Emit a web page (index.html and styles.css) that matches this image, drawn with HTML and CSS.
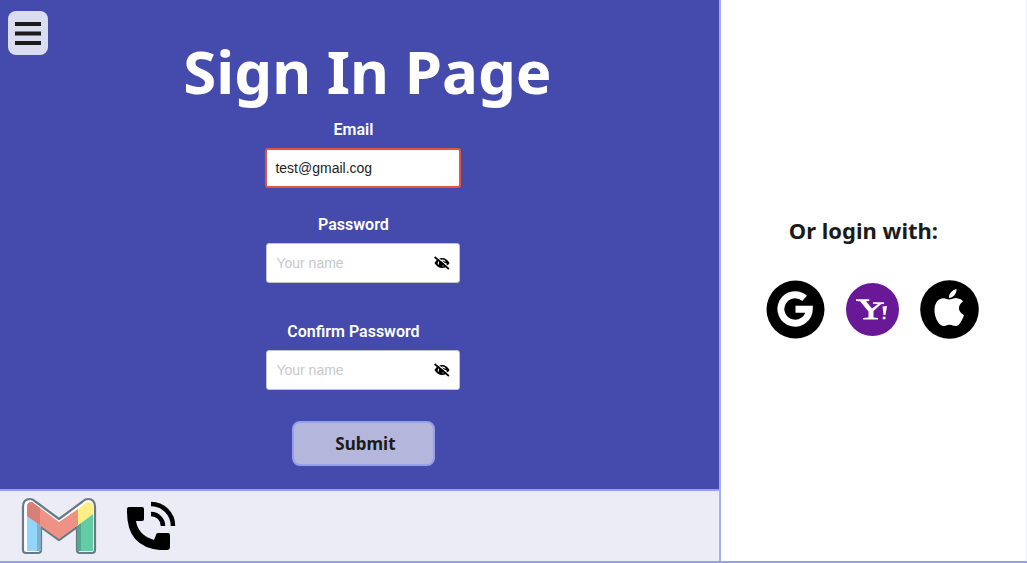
FILE: index.html
```html
<!DOCTYPE html>
<html lang="en">
<head>
<meta charset="utf-8">
<meta name="viewport" content="width=device-width, initial-scale=1">
<title>Sign In Page</title>
<link rel="stylesheet" href="styles.css">
</head>
<body>
<div class="page">
  <main class="signin">
    <button class="menu" type="button" aria-label="Menu">
      <svg width="28" height="24" viewBox="0 0 28 24"><path d="M1 3h26M1 12.500h26M1 22h26" stroke="#1b1b1b" stroke-width="4.200" stroke-linecap="butt"/></svg>
    </button>
    <h1 class="title">Sign In Page</h1>
    <form class="form">
      <div class="field">
        <label class="label" for="email">Email</label>
        <input class="input input-invalid" id="email" type="text" value="test@gmail.cog">
      </div>
      <div class="field">
        <label class="label" for="password">Password</label>
        <div class="input password">
          <input class="password-input" id="password" type="password" placeholder="Your name">
          <button class="eye" type="button" aria-label="Show password">
            <svg width="16" height="14" viewBox="0 0 16 14"><path d="M.5 7Q3.500 2 8 2T15.500 7Q12.500 12 8 12T.5 7Z"/><path d="M4.500 8.500A4 3.400 0 0 1 11.500 5.500M12 7A4 3.400 0 0 1 8.500 10" fill="none" stroke="#fff" stroke-width="1.100"/><path d="M1.800 0l14 11.800" stroke="#fff" stroke-width="1.100"/><path d="M.6 1l14.300 12" stroke="#000" stroke-width="1.700"/></svg>
          </button>
        </div>
      </div>
      <div class="field">
        <label class="label" for="confirm">Confirm Password</label>
        <div class="input password">
          <input class="password-input" id="confirm" type="password" placeholder="Your name">
          <button class="eye" type="button" aria-label="Show confirmed password">
            <svg width="16" height="14" viewBox="0 0 16 14"><path d="M.5 7Q3.500 2 8 2T15.500 7Q12.500 12 8 12T.5 7Z"/><path d="M4.500 8.500A4 3.400 0 0 1 11.500 5.500M12 7A4 3.400 0 0 1 8.500 10" fill="none" stroke="#fff" stroke-width="1.100"/><path d="M1.800 0l14 11.800" stroke="#fff" stroke-width="1.100"/><path d="M.6 1l14.300 12" stroke="#000" stroke-width="1.700"/></svg>
          </button>
        </div>
      </div>
      <button class="submit" type="submit">Submit</button>
    </form>
  </main>
  <footer class="contact">
    <a class="link" href="#mail" aria-label="Gmail">
      <svg width="76" height="58" viewBox="0 0 76 58">
        <path d="M2 10Q2 2 9 2Q12 2 15 5L38 22L61 5Q64 2 67 2Q74 2 74 10V53Q74 56 71 56H59Q56 56 56 53V30L38 43L20 30V53Q20 56 17 56H5Q2 56 2 53Z" fill="#fff" stroke="#687a85" stroke-width="2.200" stroke-linejoin="round"/>
        <path d="M6 19L19 28V54H6Z" fill="#91d5fa"/>
        <path d="M16 26L20 29V54H16Z" fill="#82afc8"/>
        <path d="M57 28L72 17V54H57Z" fill="#61cda4"/>
        <path d="M56 29L60 26V54H56Z" fill="#54a891"/>
        <path d="M6 19V10Q6 5 11 5L38 25L57 12V28L38 42Z" fill="#ef9184"/>
        <path d="M6 19V10Q6 5 11 5L19 11V28Z" fill="#d87f77"/>
        <path d="M57 12L66 5Q72 4 72 10V17L57 28Z" fill="#ffee83"/>
      </svg>
    </a>
    <a class="link" href="#phone" aria-label="Call us">
      <svg width="50" height="50" viewBox="0 0 50 50">
        <path d="M3 6H16Q18 6 18 8V18Q18 20 16 20H10Q12 34 28 39L30 34Q30 32 32 32H42Q44 32 44 34V46Q44 49 41 49H34Q1 46 1 11V8Q1 6 3 6Z"/>
        <path d="M25 13A12 12 0 0 1 37 25M25 3A22 22 0 0 1 47 25" fill="none" stroke="#000" stroke-width="4.500"/>
      </svg>
    </a>
  </footer>
  <aside class="social">
    <h2 class="social-title">Or login with:</h2>
    <div class="providers">
      <a class="link" href="#google" aria-label="Google">
        <svg width="59" height="59" viewBox="0 0 59 59"><circle cx="29.500" cy="29.500" r="29"/><path d="M38.600 18.400A14.200 14.200 0 1 0 43.300 29.200H29.500" fill="none" stroke="#fff" stroke-width="7"/></svg>
      </a>
      <a class="link" href="#yahoo" aria-label="Yahoo">
        <svg width="53" height="53" viewBox="0 0 53 53"><circle cx="26.500" cy="26.500" r="26.500" fill="#691898"/><path d="M10 16.300H23.300V18L20 18.300L26 25.500L32 21L27 20.700V19.300H38V20.700L35 21.200L27.500 28V34.500L32 35V36.500H17V35L22.500 34.500V28.500L14 18.300L10 18ZM36.500 23.500L41 23L39.500 32H37.500ZM36.800 33.800H39.500V36.300H36.800Z" fill="#fff"/></svg>
      </a>
      <a class="link" href="#apple" aria-label="Apple">
        <svg width="59" height="59" viewBox="0 0 59 59"><circle cx="29.500" cy="29.500" r="29.300"/><path d="M29 19.500C32 19.500 34 17.700 37 18.200C40 18.700 42 19.500 43 21.500C37.500 25 37.500 32 44 35C42 41 39 46 36 46C33 46 32.500 44.700 29.500 44.700C26.500 44.700 25.500 46.300 23 46C18 45 14 36 14.500 29C15 22 19 18.200 23.500 18.200C26 18.200 27.500 19.500 29 19.500ZM29 18C28.500 14 32 10 36.500 9C37 13.500 33 18 29 18Z" fill="#fff"/></svg>
      </a>
    </div>
  </aside>
</div>
</body>
</html>
```
FILE: styles.css
```css
* { box-sizing: border-box; }

body {
  margin: 0;
  font-family: "Noto Sans", sans-serif;
  color: #1b1b1b;
}

.page {
  min-height: 100vh;
  display: grid;
  grid-template-columns: 7fr 3fr;
  grid-template-rows: 1fr auto;
  border-bottom: 2px solid #979fe8;
}

.signin {
  position: relative;
  display: flex;
  flex-direction: column;
  align-items: center;
  padding: 31px 0 23px 8px;
  background: #444bac;
}

.menu {
  position: absolute;
  top: 11px;
  left: 8px;
  display: grid;
  place-items: center;
  width: 40px;
  height: 44px;
  padding: 0;
  border: 0;
  border-radius: 8px;
  background: #dadcf0;
}

.title {
  margin: 0;
  padding-left: 8px;
  font-size: 60px;
  line-height: 80px;
  font-weight: 700;
  color: #fff;
}

.form {
  display: flex;
  flex-direction: column;
  align-items: center;
  padding-top: 9px;
}

.field {
  display: flex;
  flex-direction: column;
  align-items: center;
  gap: 8px;
  margin-bottom: 27px;
}

.field:nth-of-type(2) { margin-bottom: 39px; }

.field:nth-of-type(3) { margin-bottom: 31px; }

.label {
  padding-right: 20px;
  font: 600 16px/20px Roboto, sans-serif;
  color: #fff;
}

.input {
  width: 194px;
  height: 40px;
  border: 1px solid #c3c3cb;
  border-radius: 3px;
  background: #fff;
  color: #222;
  font: 14px/20px "Liberation Sans", Arial, sans-serif;
}

.input-invalid {
  width: 196px;
  padding: 0 8px;
  border: 2px solid #df5642;
}

.password {
  display: flex;
  align-items: center;
  padding: 0 9px;
}

.password-input {
  flex: 1;
  min-width: 0;
  padding: 0;
  border: 0;
  background: none;
  font: inherit;
}

.password-input::placeholder { color: #c8c8c8; }

.eye {
  display: flex;
  padding: 0;
  border: 0;
  background: none;
}

.submit {
  width: 143px;
  height: 45px;
  padding: 0 0 0 4px;
  border: 2px solid #969fe9;
  border-radius: 8px;
  background: #b4b6dc;
  color: #1b1b1b;
  font: 700 17px/24px "Noto Sans", sans-serif;
}

.contact {
  grid-row: 2;
  display: flex;
  align-items: center;
  gap: 29px;
  height: 72px;
  padding-left: 21px;
  border-top: 2px solid #979fe8;
  background: #ebecf6;
}

.link { display: flex; }

.social {
  grid-column: 2;
  grid-row: 1 / 3;
  display: flex;
  flex-direction: column;
  align-items: center;
  justify-content: center;
  gap: 35px;
  padding: 0 2px 7px 0;
  border-left: 2px solid #a5acf0;
  border-right: 1px solid #ededfb;
  background: #fff;
}

.social-title {
  margin: 0;
  padding-right: 18px;
  font-size: 22px;
  line-height: 30px;
  font-weight: 700;
}

.providers {
  display: flex;
  align-items: center;
  gap: 21px;
}
```
